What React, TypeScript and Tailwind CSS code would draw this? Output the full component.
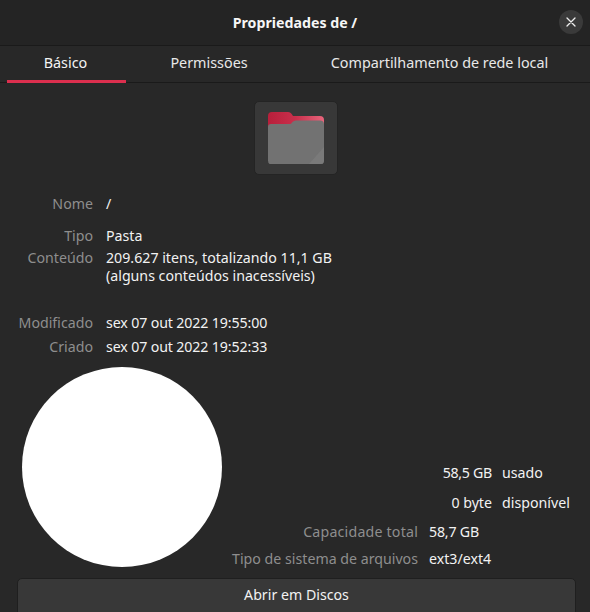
import React from 'react';

const tabs = [
  { label: 'Básico', cls: 'w-[119px] pr-[2px] text-[#f4f4f4] border-[#dc2f4e]' },
  { label: 'Permissões', cls: 'w-[166px] text-[#e8e8e8] border-transparent' },
  { label: 'Compartilhamento de rede local', cls: 'flex-1 pr-[3px] text-[#e8e8e8] border-transparent' },
];

const FolderIcon = () => (
  <svg width="56" height="52" viewBox="0 0 56 52" className="block">
    <defs>
      <linearGradient id="back" x1="0" y1="0" x2="1" y2="0">
        <stop offset="0" stopColor="#b81f3b" />
        <stop offset="0.5" stopColor="#c9304c" />
        <stop offset="1" stopColor="#e8657c" />
      </linearGradient>
    </defs>
    <path d="M0 4a4 4 0 0 1 4-4h16c2 0 3 1 4 2.500l1 1.500h27a4 4 0 0 1 4 4v12H0z" fill="url(#back)" />
    <path d="M0 15a3 3 0 0 1 3-3h18c1.500 0 2.500-.500 3-1.500 1-1 2-2 4-2h24a4 4 0 0 1 4 4v36a4 4 0 0 1-4 4H4a4 4 0 0 1-4-4z" fill="#727272" />
    <path d="M56 35v13a4 4 0 0 1-4 4H41z" fill="#7a7a7a" />
  </svg>
);

const InfoRow = ({ label, value, className, valueCls }: { label: string; value: React.ReactNode; className?: string; valueCls?: string }) => (
  <div className={`flex leading-[18px] ${className ?? ''}`}>
    <div className="w-[93px] text-right text-[#8e8e8e] whitespace-nowrap flex justify-end">{label}</div>
    <div className={`ml-[13px] text-[#f2f2f2] ${valueCls ?? ''}`}>{value}</div>
  </div>
);

export default function App() {
  return (
    <div className="w-[590px] h-[612px] overflow-hidden bg-[#282828] text-[14.2px] font-['Noto_Sans',sans-serif]">
      <header className="h-[46px] bg-[#242424] border-b border-[#1a1a1a] flex items-center relative">
        <h1 className="w-full text-center text-[14.2px] font-bold text-[#f6f6f6]">Propriedades de /</h1>
        <button className="absolute right-[7px] top-[10px] w-6 h-6 rounded-full bg-[#3a3a3a] flex items-center justify-center">
          <svg width="10" height="10" viewBox="0 0 10 10">
            <path d="M1 1l8 8M9 1l-8 8" stroke="#eeeeee" strokeWidth="1.300" strokeLinecap="round" />
          </svg>
        </button>
      </header>

      <nav className="h-[37px] pl-[7px] flex border-b border-[#1a1a1a] text-[14.35px]">
        {tabs.map((t) => (
          <div key={t.label} className={`h-[37px] border-b-[3px] flex items-center justify-center pb-px ${t.cls}`}>
            {t.label}
          </div>
        ))}
      </nav>

      <div className="mt-[18px] flex justify-center pl-[2px]">
        <div className="w-[84px] h-[74px] rounded-[5px] bg-[#383838] border border-[#242424] flex items-center justify-center">
          <FolderIcon />
        </div>
      </div>

      <InfoRow label="Nome" value="/" className="mt-[20px]" />
      <InfoRow label="Tipo" value="Pasta" className="mt-[14px]" />
      <InfoRow
        label="Conteúdo"
        value={
          <>
            209.627 itens, totalizando 11,1 GB
            <br />
            (alguns conteúdos inacessíveis)
          </>
        }
        className="mt-[4px]"
      />
      <InfoRow label="Modificado" value="sex 07 out 2022 19:55:00" className="mt-[29px]" valueCls="tracking-[-0.13px]" />
      <InfoRow label="Criado" value="sex 07 out 2022 19:52:33" className="mt-[6px]" valueCls="tracking-[-0.13px]" />

      <div className="flex mt-[11px] pl-[22px]">
        <div className="w-[200px] h-[200px] rounded-full bg-white shrink-0" />
        <div className="flex-1 pt-[97px] leading-[18px]">
          <div className="flex">
            <div className="w-[270px] text-right text-[#f2f2f2] tracking-[-0.3px]">58,5 GB</div>
            <div className="ml-[10px] text-[#f2f2f2]">usado</div>
          </div>
          <div className="flex mt-[12px]">
            <div className="w-[270px] text-right text-[#f2f2f2]">0 byte</div>
            <div className="ml-[10px] text-[#f2f2f2]">disponível</div>
          </div>
          <div className="flex mt-[11px]">
            <div className="w-[196px] text-right text-[#8e8e8e] tracking-[0.2px]">Capacidade total</div>
            <div className="ml-[11px] text-[#f2f2f2] tracking-[-0.2px]">58,7 GB</div>
          </div>
          <div className="flex mt-[9px] -ml-[22px]">
            <div className="w-[218px] text-right text-[#8e8e8e] whitespace-nowrap">Tipo de sistema de arquivos</div>
            <div className="ml-[11px] text-[#f2f2f2]">ext3/ext4</div>
          </div>
        </div>
      </div>

      <div className="mt-[10px] mx-[17px] mr-[14px] h-[40px] rounded-[5px] bg-[#383838] border border-[#1f1f1f] pt-[6px] text-center text-[#f2f2f2] leading-[20px]">
        Abrir em Discos
      </div>
    </div>
  );
}
